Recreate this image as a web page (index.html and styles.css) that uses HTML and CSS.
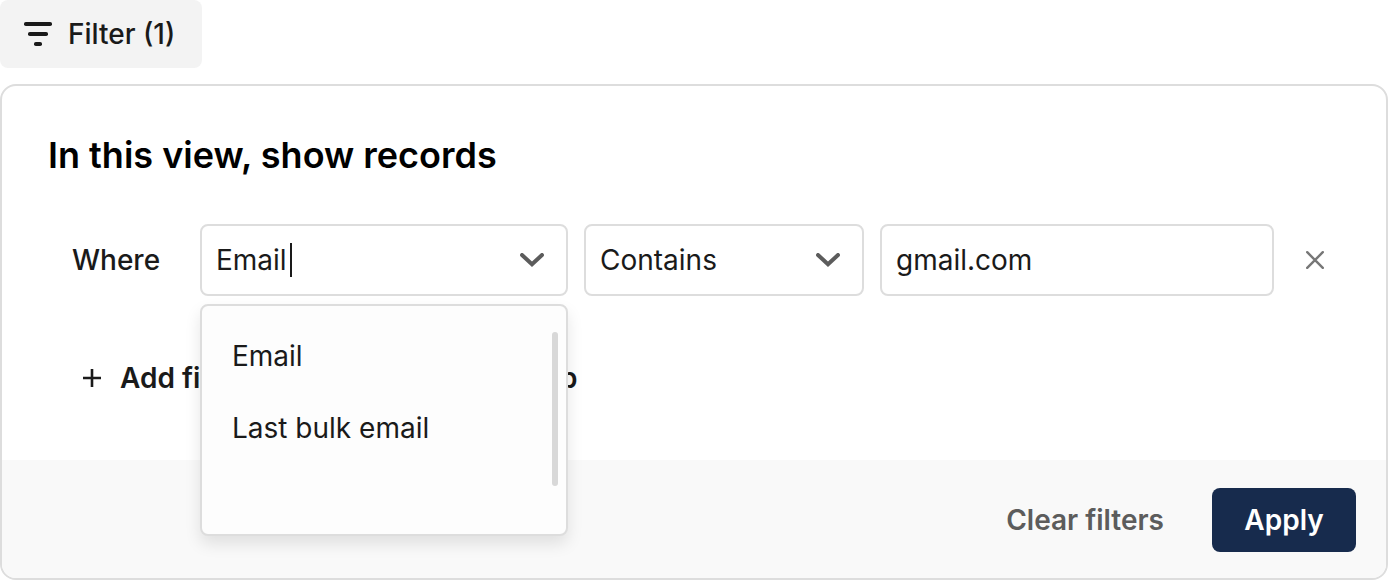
FILE: index.html
```html
<!DOCTYPE html>
<html lang="en">
<head>
<meta charset="utf-8">
<meta name="viewport" content="width=device-width, initial-scale=1">
<title>Filter</title>
<link rel="stylesheet" href="styles.css">
</head>
<body>
<button class="filter-toggle" type="button" aria-expanded="true">
  <svg class="icon-filter" width="28" height="24" viewBox="0 0 28 24" fill="currentColor" aria-hidden="true">
    <rect x="0" y="0" width="28" height="4" rx="1.8"/>
    <rect x="4" y="10" width="20" height="4" rx="1.8"/>
    <rect x="10" y="20" width="8" height="4" rx="1.8"/>
  </svg>
  <span>Filter (1)</span>
</button>

<form class="panel">
  <div class="panel-body">
    <h2 class="title">In this view, show records</h2>
    <div class="rule">
      <label class="where" for="field">Where</label>
      <div class="combo">
        <div class="control">
          <input class="combo-input" id="field" type="text" role="combobox" aria-expanded="true" aria-controls="field-list" value="Email" size="5" autocomplete="off">
          <span class="caret"></span>
          <svg class="chevron" width="24" height="14" viewBox="0 0 24 14" fill="none" stroke="currentColor" stroke-width="4" stroke-linecap="round" stroke-linejoin="miter" aria-hidden="true"><path d="M2 2 12 11.2 22 2"/></svg>
        </div>
        <div class="menu">
          <ul class="options" id="field-list" role="listbox">
            <li class="option" role="option">Email</li>
            <li class="option" role="option">Last bulk email</li>
          </ul>
          <span class="scrollbar"></span>
        </div>
      </div>
      <div class="select-wrap">
        <select class="control select" aria-label="Condition">
          <option>Contains</option>
        </select>
        <svg class="chevron select-chevron" width="24" height="14" viewBox="0 0 24 14" fill="none" stroke="currentColor" stroke-width="4" stroke-linecap="round" stroke-linejoin="miter" aria-hidden="true"><path d="M2 2 12 11.2 22 2"/></svg>
      </div>
      <input class="control value" type="text" aria-label="Value" value="gmail.com">
      <button class="remove" type="button" aria-label="Remove filter">
        <svg width="18" height="18" viewBox="0 0 18 18" fill="none" stroke="currentColor" stroke-width="2.4" stroke-linecap="round" aria-hidden="true"><path d="M1.2 1.2 16.8 16.8M16.8 1.2 1.2 16.8"/></svg>
      </button>
    </div>
    <div class="add-row">
      <button class="add" type="button">
        <svg width="20" height="20" viewBox="0 0 20 20" fill="none" stroke="currentColor" stroke-width="2.6" aria-hidden="true"><path d="M1 10H19M10 1V19"/></svg>
        <span>Add filter</span>
      </button>
      <button class="add" type="button">
        <svg width="20" height="20" viewBox="0 0 20 20" fill="none" stroke="currentColor" stroke-width="2.6" aria-hidden="true"><path d="M1 10H19M10 1V19"/></svg>
        <span>Add filter group</span>
      </button>
    </div>
  </div>
  <div class="panel-footer">
    <button class="clear" type="button">Clear filters</button>
    <button class="apply" type="submit">Apply</button>
  </div>
</form>
</body>
</html>
```

FILE: styles.css
```css
* {
  box-sizing: border-box;
}

body {
  margin: 0;
  background: #fff;
  color: #1a1a1a;
  font: 400 28px/36px Inter, "Liberation Sans", sans-serif;
}

button,
input,
select {
  font: inherit;
  color: inherit;
}

button {
  padding: 0;
  border: 0;
  background: none;
  cursor: pointer;
}

svg {
  display: block;
  flex: none;
}

.filter-toggle {
  display: flex;
  align-items: center;
  gap: 16px;
  padding: 16px 27px 16px 24px;
  border-radius: 8px;
  background: #f3f3f3;
  font-weight: 500;
}

.panel {
  margin-top: 16px;
  border: 2px solid #ddd;
  border-radius: 16px;
}

.panel-body {
  padding: 46px 46px 64px;
}

.title {
  margin: 0;
  color: #000;
  font-size: 36px;
  font-weight: 600;
  line-height: 46px;
}

.rule {
  display: grid;
  grid-template-columns: 112px 368px 280px 1fr 50px;
  column-gap: 16px;
  align-items: center;
  margin-top: 46px;
  padding-left: 24px;
}

.where {
  font-weight: 500;
}

.combo,
.select-wrap {
  position: relative;
}

.control {
  display: flex;
  align-items: center;
  width: 100%;
  min-width: 0;
  height: 72px;
  padding: 0 22px 0 14px;
  border: 2px solid #ddd;
  border-radius: 8px;
  background: #fff;
  outline: 0;
}

.combo-input {
  field-sizing: content;
  padding: 0;
  border: 0;
  background: none;
  outline: 0;
}

.caret {
  width: 2px;
  height: 34px;
  margin-left: 3px;
  background: #1a1a1a;
}

.chevron {
  margin-left: auto;
  color: #5c5c5c;
}

.select {
  appearance: none;
}

.select-chevron {
  position: absolute;
  top: 29px;
  right: 24px;
  pointer-events: none;
}

.menu {
  position: absolute;
  z-index: 1;
  top: calc(100% + 8px);
  left: 0;
  display: flex;
  width: 100%;
  height: 232px;
  padding: 14px 8px 14px 30px;
  border: 2px solid #ddd;
  border-radius: 8px;
  background: #fdfdfd;
  box-shadow: 0 8px 16px rgba(0, 0, 0, 0.1);
}

.options {
  flex: 1;
  margin: 0;
  padding: 0;
  list-style: none;
}

.option {
  padding: 18px 0;
}

.scrollbar {
  width: 6px;
  height: 154px;
  margin-top: 12px;
  border-radius: 3px;
  background: #d8d8d8;
}

.remove {
  display: flex;
  justify-content: center;
  padding: 16px 0;
  color: #777;
}

.add-row {
  display: flex;
  gap: 82px;
  margin-top: 64px;
  padding-left: 34px;
}

.add {
  display: flex;
  align-items: center;
  gap: 18px;
  font-weight: 600;
}

.panel-footer {
  display: flex;
  align-items: center;
  justify-content: flex-end;
  gap: 48px;
  padding: 28px 30px 26px;
  border-radius: 0 0 14px 14px;
  background: #f9f9f9;
}

.clear {
  color: #5c5c5c;
  font-weight: 600;
}

.apply {
  min-width: 144px;
  padding: 14px 32px;
  border-radius: 8px;
  background: #172b4d;
  color: #fff;
  font-weight: 600;
}
```
